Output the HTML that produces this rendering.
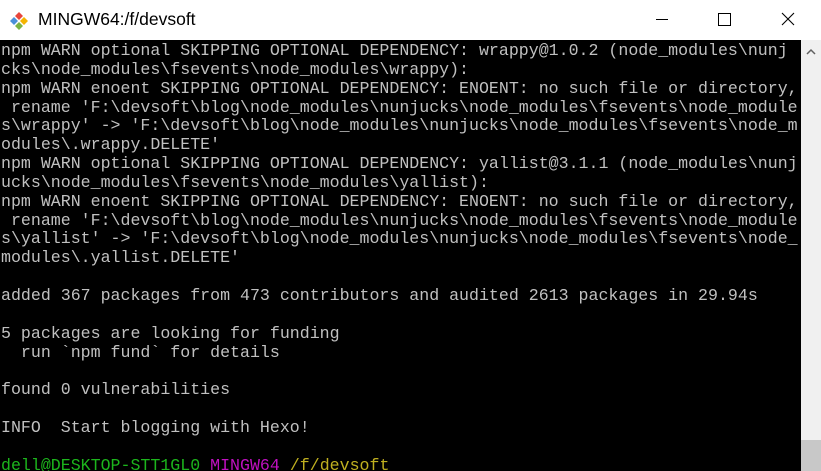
<!DOCTYPE html><html><head><style>
html,body{margin:0;padding:0;width:821px;height:471px;overflow:hidden;background:#000}
#title{position:absolute;left:0;top:0;width:821px;height:40px;background:#fff;font-family:"Liberation Sans",sans-serif}
#title .t{position:absolute;left:38px;top:9px;font-size:17.5px;color:#000}
#term{position:absolute;left:1px;top:42px;width:800px;height:429px;font-family:"Liberation Mono",monospace;font-size:16.6px;line-height:18.85px;color:#c0c0c0;white-space:pre;overflow:hidden}
#sb{position:absolute;left:801px;top:40px;width:20px;height:431px;background:#f0f0f0}
#thumb{position:absolute;left:801px;top:440px;width:20px;height:31px;background:#c8c8c8}
.g{color:#1cb51c}.m{color:#c010c0}.y{color:#c0b020}
</style></head><body>
<div id="title">
<svg style="position:absolute;left:9px;top:11px" width="20" height="20" viewBox="0 0 20 20">
<polygon points="10,1 14,5 10,9 6,5" fill="#e8453c"/>
<polygon points="5,6 9,10 5,14 1,10" fill="#4a90d9"/>
<polygon points="15,6 19,10 15,14 11,10" fill="#f4b400"/>
<polygon points="10,11 14,15 10,19 6,15" fill="#7cb342"/>
</svg>
<span class="t">MINGW64:/f/devsoft</span>
<div style="position:absolute;left:656px;top:19px;width:12px;height:1px;background:#000"></div>
<div style="position:absolute;left:718px;top:13px;width:11px;height:11px;border:1px solid #000"></div>
<svg style="position:absolute;left:781px;top:12px" width="14" height="14"><path d="M1 1L13 13M13 1L1 13" stroke="#000" stroke-width="1.1"/></svg>
</div>
<div id="term">npm WARN optional SKIPPING OPTIONAL DEPENDENCY: wrappy@1.0.2 (node_modules\nunj
cks\node_modules\fsevents\node_modules\wrappy):
npm WARN enoent SKIPPING OPTIONAL DEPENDENCY: ENOENT: no such file or directory,
 rename 'F:\devsoft\blog\node_modules\nunjucks\node_modules\fsevents\node_module
s\wrappy' -> 'F:\devsoft\blog\node_modules\nunjucks\node_modules\fsevents\node_m
odules\.wrappy.DELETE'
npm WARN optional SKIPPING OPTIONAL DEPENDENCY: yallist@3.1.1 (node_modules\nunj
ucks\node_modules\fsevents\node_modules\yallist):
npm WARN enoent SKIPPING OPTIONAL DEPENDENCY: ENOENT: no such file or directory,
 rename 'F:\devsoft\blog\node_modules\nunjucks\node_modules\fsevents\node_module
s\yallist' -> 'F:\devsoft\blog\node_modules\nunjucks\node_modules\fsevents\node_
modules\.yallist.DELETE'

added 367 packages from 473 contributors and audited 2613 packages in 29.94s

5 packages are looking for funding
  run `npm fund` for details

found 0 vulnerabilities

INFO  Start blogging with Hexo!

<span class="g">dell@DESKTOP-STT1GL0</span> <span class="m">MINGW64</span> <span class="y">/f/devsoft</span></div>
<div id="sb"></div><div id="thumb"></div>
<svg style="position:absolute;left:804px;top:47px" width="14" height="10"><path d="M3 7L7 3L11 7" stroke="#606060" stroke-width="1.5" fill="none"/></svg>
</body></html>
